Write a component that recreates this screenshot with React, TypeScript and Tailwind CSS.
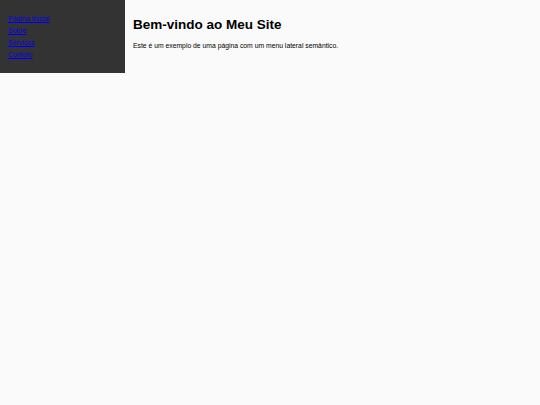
import React from 'react';

const links = ['Página Inicial', 'Sobre', 'Serviços', 'Contato'];

const App: React.FC = () => {
  return (
    <div className="min-h-[405px] w-full bg-[#fafafa] flex items-start" style={{ fontFamily: '"Liberation Sans", Arial, sans-serif' }}>
      <aside className="w-[125px] h-[73px] bg-[#333333] shrink-0">
        <nav>
          <ul className="pt-[15px] pl-[8px] flex flex-col gap-[4px]">
            {links.map((l) => (
              <li key={l} className="text-[7px] leading-[8px]">
                <a href="#" className="text-[#0000ee] underline">{l}</a>
              </li>
            ))}
          </ul>
        </nav>
      </aside>
      <main className="pl-[8px] pt-[17px]">
        <h1 className="text-[13.5px] font-bold text-black leading-[16px]">Bem-vindo ao Meu Site</h1>
        <p className="text-[6.8px] leading-[8px] text-black mt-[9px]">Este é um exemplo de uma página com um menu lateral semântico.</p>
      </main>
    </div>
  );
};

export default App;
